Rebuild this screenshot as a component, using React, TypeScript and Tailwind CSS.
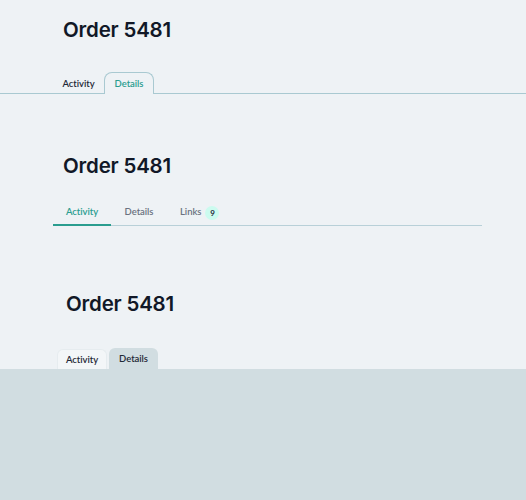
import React from 'react';

const head = "font-['Inter',sans-serif] text-[20.5px] font-semibold text-[#111827] leading-[28px] tracking-[-0.2px]";
const tabFont = "font-['Lato',sans-serif] text-[9.5px] font-semibold tracking-[-0.05px]";

const App: React.FC = () => {
  return (
    <div className="w-[526px] h-[500px] bg-[#eef2f5] flex flex-col overflow-hidden">
      {/* Variant 1: bordered tabs */}
      <div className="pt-[16px]">
        <h1 className={`${head} ml-[63px]`}>Order 5481</h1>
        <div className="mt-[28px] flex items-end border-b border-[#a9c9d1] pl-[53px]">
          <button className={`${tabFont} text-[#1f2937] w-[51px] justify-center h-[20px] mb-[-1px] flex items-center`}>Activity</button>
          <button className={`${tabFont} text-[#2a9d8f] w-[50px] justify-center h-[22px] mb-[-1px] border border-b-0 border-[#a9c9d1] rounded-t-[8px] bg-[#eef2f5] flex items-center pt-[2px]`}>Details</button>
        </div>
      </div>

      {/* Variant 2: underline tabs */}
      <div className="pt-[58px]">
        <h1 className={`${head} ml-[63px]`}>Order 5481</h1>
        <div className="mt-[20px] ml-[53px] w-[429px] flex items-end border-b border-[#b8d0d8]">
          <button className={`${tabFont} text-[#2a9d8f] w-[58px] justify-center h-[25px] mb-[-1px] border-b-2 border-[#2a9d8f] flex items-center`}>Activity</button>
          <button className={`${tabFont} text-[#6b7280] w-[56px] justify-center h-[25px] flex items-center`}>Details</button>
          <button className={`${tabFont} text-[#6b7280] pl-[13px] pr-[14px] h-[25px] flex items-center gap-[4px]`}>
            Links
            <span className="w-[14px] h-[14px] rounded-full bg-[#ccfbef] text-[#1f2937] text-[8px] font-bold flex items-center justify-center">9</span>
          </button>
        </div>
      </div>

      {/* Variant 3: filled tabs */}
      <div className="pt-[64px] flex-1 flex flex-col">
        <h1 className={`${head} ml-[66px]`}>Order 5481</h1>
        <div className="mt-[30px] ml-[57px] flex items-end gap-[2px]">
          <button className={`${tabFont} text-[#1f2937] w-[50px] h-[20px] pt-[1px] rounded-t-[6px] bg-[#f3f6f8] border border-b-0 border-[#e6ecef] flex items-center justify-center`}>Activity</button>
          <button className={`${tabFont} text-[#1f2937] w-[49px] h-[21px] pt-[2px] rounded-t-[6px] bg-[#d1dde1] flex items-center justify-center`}>Details</button>
        </div>
        <div className="flex-1 bg-[#d1dde1]" />
      </div>
    </div>
  );
};

export default App;
